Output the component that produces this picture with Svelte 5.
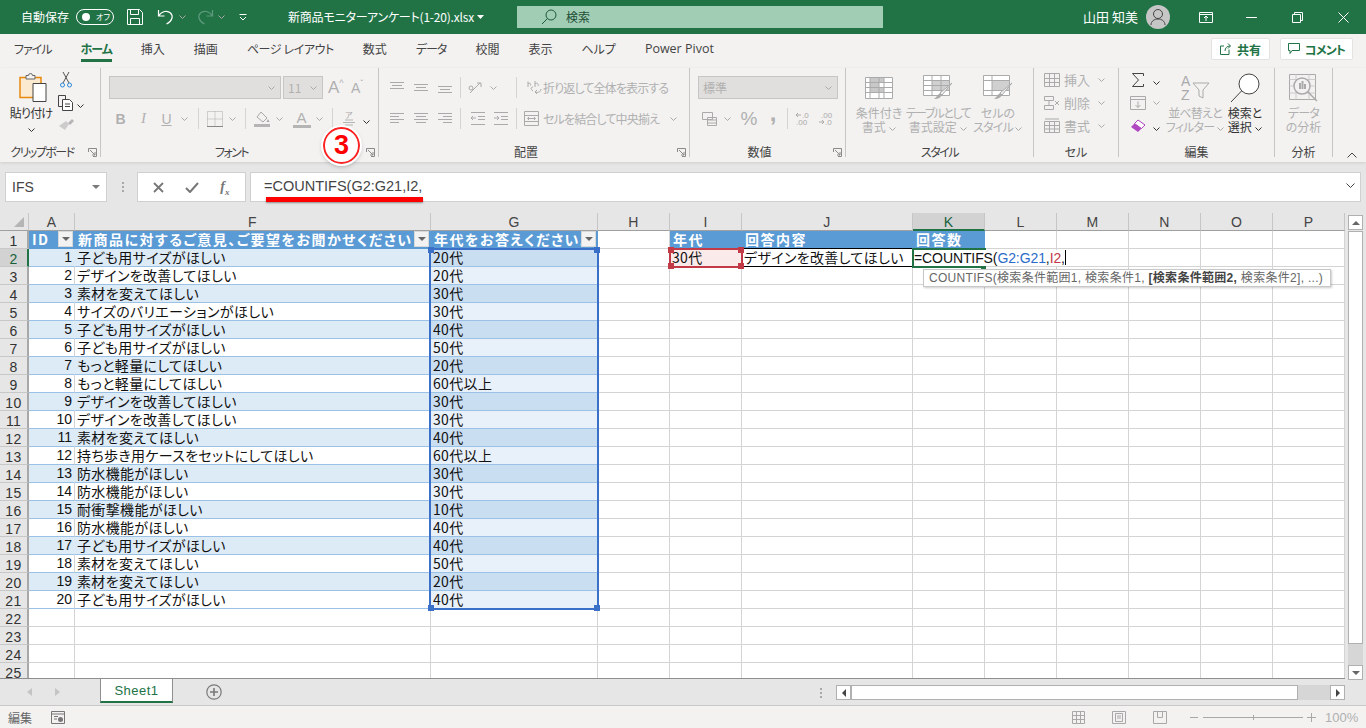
<script>
	const cols = ['A', 'F', 'G', 'H', 'I', 'J', 'K', 'L', 'M', 'N', 'O', 'P'];
	const rows = Array.from({ length: 25 }, (_, i) => i + 1);
	const tabs = ['ファイル', 'ホーム', '挿入', '描画', 'ページ レイアウト', '数式', 'データ', '校閲', '表示', 'ヘルプ', 'Power Pivot'];

	const answers = [
		['子ども用サイズがほしい', '20代'],
		['デザインを改善してほしい', '20代'],
		['素材を変えてほしい', '30代'],
		['サイズのバリエーションがほしい', '30代'],
		['子ども用サイズがほしい', '40代'],
		['子ども用サイズがほしい', '50代'],
		['もっと軽量にしてほしい', '20代'],
		['もっと軽量にしてほしい', '60代以上'],
		['デザインを改善してほしい', '30代'],
		['デザインを改善してほしい', '30代'],
		['素材を変えてほしい', '40代'],
		['持ち歩き用ケースをセットにしてほしい', '60代以上'],
		['防水機能がほしい', '30代'],
		['防水機能がほしい', '30代'],
		['耐衝撃機能がほしい', '10代'],
		['防水機能がほしい', '40代'],
		['子ども用サイズがほしい', '40代'],
		['素材を変えてほしい', '50代'],
		['素材を変えてほしい', '20代'],
		['子ども用サイズがほしい', '40代']
	];

	const heads = {
		A: 'ID',
		F: '新商品に対するご意見、ご要望をお聞かせください',
		G: '年代をお答えください。',
		I: '年代',
		J: '回答内容',
		K: '回答数'
	};

	function cellClass(r, c) {
		if (r === 1 && heads[c]) return 'cell th';
		if (r === 2 && c === 'I') return 'cell pink';
		if (r === 2 && c === 'J') return 'cell boxed';
		if (r >= 2 && r <= 21 && 'AFG'.includes(c)) {
			let s = 'cell td';
			if (r % 2 === 0) s += ' band';
			if (c === 'G') s += ' sel';
			if (c === 'A') s += ' idcol';
			return s;
		}
		return 'cell';
	}

	function cellText(r, c) {
		if (r === 1) return heads[c] ?? '';
		if (r === 2 && c === 'I') return '30代';
		if (r === 2 && c === 'J') return 'デザインを改善してほしい';
		if (r > 21) return '';
		if (c === 'A') return r - 1;
		if (c === 'F') return answers[r - 2][0];
		if (c === 'G') return answers[r - 2][1];
		return '';
	}
</script>

{#snippet chev(cls = '')}
	<span class="chev {cls}"><svg width="7" height="4" viewBox="0 0 7 4"><path d="M.5.5l3 3 3-3" fill="none" stroke="currentColor" /></svg></span>
{/snippet}

{#snippet launcher()}
	<svg class="launch" width="9" height="9" viewBox="0 0 9 9"><path d="M.5 4V.5H8.500V8.500H5M2 2l5 5M7 4v3H4" fill="none" stroke="#8a8a8a" /></svg>
{/snippet}

<div class="app">
	<header class="titlebar">
		<span class="autosave">自動保存</span>
		<span class="toggle"><i></i><b>オフ</b></span>
		<svg class="ti save" width="16" height="16" viewBox="0 0 16 16"><path d="M.5.500h12l3 3v12H.5zM3.500.5v5h8v-5M3.500 15.500v-6h9v6" fill="none" stroke="#fff" /></svg>
		<svg class="ti undo" width="18" height="18" viewBox="0 0 18 18"><path d="M1.500 2v6h6M1.500 8c3-5 9-6 12-3s2 8-4 11" fill="none" stroke="#fff" stroke-width="1.200" /></svg>
		<span class="tchev">{@render chev()}</span>
		<svg class="ti redo" width="18" height="18" viewBox="0 0 18 18"><path d="M16.500 2v6h-6M16.500 8c-3-5-9-6-12-3s-2 8 4 11" fill="none" stroke="#5d9a7b" stroke-width="1.200" /></svg>
		<span class="tchev dim">{@render chev()}</span>
		<svg class="ti custom" width="8" height="7" viewBox="0 0 8 7"><path d="M.5.500h7M1 3l3 3 3-3" fill="none" stroke="#fff" /></svg>
		<span class="filename">新商品モニターアンケート(1-20).xlsx</span>
		<svg class="caret" width="7" height="4" viewBox="0 0 7 4"><path d="M0 0h7L3.500 4z" fill="#fff" /></svg>
		<div class="search">
			<svg width="16" height="16" viewBox="0 0 16 16"><circle cx="10" cy="6" r="5" fill="none" stroke="#1d5a3a" /><path d="M6.500 9.500L1 15" stroke="#1d5a3a" /></svg>
			<span>検索</span>
		</div>
		<span class="user">山田 知美</span>
		<span class="avatar"><svg width="16" height="18" viewBox="0 0 16 18"><circle cx="8" cy="6" r="4.500" fill="none" stroke="#444" /><path d="M1 17c0-8 14-8 14 0" fill="none" stroke="#444" /></svg></span>
		<svg class="win w1" width="14" height="11" viewBox="0 0 14 11"><path d="M.5.500h13v10H.5zM.5 2.500h13M7 9V4.500M5 6l2-2 2 2" fill="none" stroke="#fff" /></svg>
		<svg class="win w2" width="11" height="1" viewBox="0 0 11 1"><path d="M0 .5h11" stroke="#fff" /></svg>
		<svg class="win w3" width="11" height="11" viewBox="0 0 11 11"><path d="M.5 2.500h8v8h-8zM2.500 2.500v-2h8v8h-2" fill="none" stroke="#fff" /></svg>
		<svg class="win w4" width="11" height="11" viewBox="0 0 11 11"><path d="M.5.500l10 10M10.500.500l-10 10" stroke="#fff" /></svg>
	</header>

	<nav class="tabs">
		{#each tabs as t, i}
			<span class="tab" class:current={i === 1} class:latin={i === 10} class:kana={i === 0 || i === 1 || i === 6} class:page={i === 4}>{t}</span>
		{/each}
		<span class="tabs-right">
			<button class="share">
				<svg width="12" height="12" viewBox="0 0 12 12"><path d="M9 6.500v5H.5V3H4M5 8c0-3 2-5 5-5M8 .5L10.500 3 8 5.500" fill="none" stroke="#217346" /></svg>
				<b>共有</b>
			</button>
			<button class="comment">
				<svg width="12" height="12" viewBox="0 0 12 12"><path d="M.5.500h11v7H4L2 10.500V7.500H.5z" fill="none" stroke="#217346" /></svg>
				<b class="kn">コメント</b>
			</button>
		</span>
	</nav>

	<section class="ribbon">
		<div class="group clip">
			<div class="body">
				<div class="big paste">
					<div class="bigicon">
						<svg width="28" height="30" viewBox="0 0 28 30">
							<path d="M1 4.500h21v20H1z" fill="#fbe9d0" stroke="#e8890c" stroke-width="1.500" />
							<path d="M7 4V2.500h2.500a2 2 0 0 1 4 0H16V6H7z" fill="#f3f2f1" stroke="#666" />
							<path d="M14 10.500h13v18H14z" fill="#fff" stroke="#444" />
						</svg>
					</div>
					<span class="dark kn">貼り付け</span>
					<span class="dark">{@render chev()}</span>
				</div>
				<div class="clipcol">
					<div class="row">
						<svg width="12" height="16" viewBox="0 0 12 16"><path d="M3 0l6 11M9 0L3 11" stroke="#555" /><circle cx="2.500" cy="13" r="2" fill="none" stroke="#2b88d8" /><circle cx="9.500" cy="13" r="2" fill="none" stroke="#2b88d8" /></svg>
					</div>
					<div class="row">
						<svg width="16" height="16" viewBox="0 0 16 16"><path d="M4 11.500H.5V.5h7V4" fill="none" stroke="#444" /><path d="M4.500 4.500h7l3 3v8h-10zM7 9h5M7 11.500h5" fill="#fff" stroke="#444" /></svg>
						<span class="dark">{@render chev()}</span>
					</div>
					<div class="row">
						<svg width="16" height="14" viewBox="0 0 16 14"><path d="M8 2l3 3-4 6-6-4z" fill="#ccc" /><path d="M10 4l4-4 2 2-4 4z" fill="#b5b5b5" /></svg>
					</div>
				</div>
			</div>
			<div class="glabel"><span class="kn2">クリップボード</span>{@render launcher()}</div>
		</div>

		<div class="group font">
			<div class="body col">
				<div class="row">
					<div class="combo fontname">{@render chev()}</div>
					<div class="combo fontsize"><span>11</span>{@render chev()}</div>
					<span class="grow">A<sup>^</sup></span>
					<span class="grow small">A<sup>ˇ</sup></span>
				</div>
				<div class="row">
					<span class="slot bold">B</span>
					<span class="slot ital">I</span>
					<span class="slot under">U</span>
					{@render chev('wide')}
					<i class="sep"></i>
					<span class="slot"><svg width="16" height="16" viewBox="0 0 16 16"><path d="M.5.500h15v15H.5zM8 .5v15M.5 8h15" fill="none" stroke="#aaa" stroke-dasharray="1 1" /><path d="M0 15.500h16" stroke="#888" /></svg></span>
					{@render chev()}
					<i class="sep"></i>
					<span class="slot"><svg width="16" height="16" viewBox="0 0 16 16"><path d="M7 1l6 6-4 4-6-5z" fill="none" stroke="#a8a8a8" /><path d="M14 8l1.500 3h-3z" fill="#a8a8a8" /><path d="M0 13h16v3H0z" fill="#b5b5b5" /></svg></span>
					{@render chev()}
					<span class="slot after"><span class="fa">A</span></span>
					{@render chev()}
					<i class="sep"></i>
					<span class="slot"><svg width="14" height="16" viewBox="0 0 14 16"><text x="3" y="7" class="tiny">ア</text><path d="M3 9h8M1 11.500h12M3 14h8" stroke="#b5b5b5" fill="none" /></svg></span>
					<span class="dark">{@render chev()}</span>
				</div>
			</div>
			<div class="glabel"><span class="kn2">フォント</span>{@render launcher()}</div>
		</div>

		<div class="group align">
			<div class="body col">
				<div class="row">
					<span class="aslot"><svg width="14" height="11" viewBox="0 0 14 11"><path d="M0 .5h14M2 3.500h10M0 6.500h14" stroke="#aaa" /></svg></span>
					<span class="aslot"><svg width="14" height="11" viewBox="0 0 14 11"><path d="M0 2.500h14M2 5.500h10M0 8.500h14" stroke="#aaa" /></svg></span>
					<span class="aslot"><svg width="14" height="11" viewBox="0 0 14 11"><path d="M0 4.500h14M2 7.500h10M0 10.500h14" stroke="#aaa" /></svg></span>
					<i class="sep s4"></i>
					<span class="slot"><svg width="16" height="14" viewBox="0 0 16 14"><path d="M2 12L12 2M9 2h4v4" fill="none" stroke="#aaa" /><circle cx="3" cy="7" r="2" fill="none" stroke="#aaa" /></svg></span>
					{@render chev()}
					<i class="sep s5"></i>
					<span class="wrapicon"><svg width="15" height="15" viewBox="0 0 15 15"><path d="M1 7V1.500M1 4c2-2 3 0 2.500 1.500M8 1v6M8 4c2-2 4 0 3 2M6 11c-3-2-2-4 0-4M14 9c0 3-3 4-6 3M10 10l-2 2 2 2" fill="none" stroke="#aaa" /></svg></span>
					<span class="wraplabel">折り返して全体を表示する</span>
				</div>
				<div class="row">
					<span class="aslot"><svg width="14" height="13" viewBox="0 0 14 13"><path d="M0 1.500h14M0 4.500h9M0 7.500h14M0 10.500h9" stroke="#aaa" /></svg></span>
					<span class="aslot"><svg width="14" height="13" viewBox="0 0 14 13"><path d="M0 1.500h14M2 4.500h10M0 7.500h14M2 10.500h10" stroke="#aaa" /></svg></span>
					<span class="aslot"><svg width="14" height="13" viewBox="0 0 14 13"><path d="M0 1.500h14M5 4.500h9M0 7.500h14M5 10.500h9" stroke="#aaa" /></svg></span>
					<i class="sep s4"></i>
					<span class="slot dedent"><svg width="14" height="13" viewBox="0 0 14 13"><path d="M0 .5h14M7 4.500h7M7 7.500h7M0 12.500h14M5 6H0M2 4L0 6l2 2" fill="none" stroke="#aaa" /></svg></span>
					<span class="slot"><svg width="14" height="13" viewBox="0 0 14 13"><path d="M0 .5h14M7 4.500h7M7 7.500h7M0 12.500h14M0 6h5M3 4l2 2-2 2" fill="none" stroke="#aaa" /></svg></span>
					<i class="sep s6"></i>
					<span class="mergeicon"><svg width="15" height="15" viewBox="0 0 15 15"><path d="M.5.500h14v14H.5zM.5 4.500h14M.5 10.500h14M4 7.500h7M5 6L3.500 7.500 5 9M10 6l1.500 1.500L10 9" fill="none" stroke="#aaa" /></svg></span>
					<span class="wraplabel merge">セルを結合して中央揃え</span>
					<span class="mergechev">{@render chev()}</span>
				</div>
			</div>
			<div class="glabel"><span>配置</span>{@render launcher()}</div>
		</div>

		<div class="group numbers">
			<div class="body col">
				<div class="row">
					<div class="combo format"><span>標準</span>{@render chev()}</div>
				</div>
				<div class="row">
					<span class="slot"><svg width="15" height="15" viewBox="0 0 15 15"><path d="M.5 1.500h10v7H.5zM5.500 6.500h9v8h-9zM5.500 9h9M5.500 12h9" fill="#f3f2f1" stroke="#aaa" /></svg></span>
					{@render chev()}
					<span class="pct">%</span>
					<span class="comma">,</span>
					<i class="sep s2"></i>
					<span class="slot"><svg width="15" height="15" viewBox="0 0 15 15"><path d="M0 4h5M2 2L0 4l2 2" fill="none" stroke="#aaa" /><text x="6" y="7" class="tiny">.0</text><text x="0" y="14" class="tiny">.00</text></svg></span>
					<span class="slot"><svg width="15" height="15" viewBox="0 0 15 15"><text x="2" y="7" class="tiny">.00</text><path d="M0 11h5M3 9l2 2-2 2" fill="none" stroke="#aaa" /><text x="6" y="14" class="tiny">.0</text></svg></span>
				</div>
			</div>
			<div class="glabel"><span>数値</span>{@render launcher()}</div>
		</div>

		<div class="group style">
			<div class="body">
				<div class="big w58">
					<div class="bigicon"><svg width="28" height="22" viewBox="0 0 28 22"><path d="M.5.500h27v21H.5z" fill="#fff" stroke="#aaa" /><path d="M5 1h14v5H5zM5 6h9v5H5zM5 11h14v5H5z" fill="#c8c8c8" /><path d="M.5 5.500h27M.5 10.500h27M.5 15.500h27M5 .5v21M14 .5v21M19 .5v21" stroke="#aaa" fill="none" /></svg></div>
					<span>条件付き</span>
					<span>書式 {@render chev('inl')}</span>
				</div>
				<div class="big w60">
					<div class="bigicon"><svg width="30" height="26" viewBox="0 0 30 26"><path d="M.5.500h26v20H.5z" fill="#fff" stroke="#aaa" /><path d="M9 6h17v10H9z" fill="#d0d0d0" /><path d="M.5 5.500h26M.5 10.500h26M.5 15.500h26M9 .5v20M18 .5v20" stroke="#aaa" fill="none" /><path d="M29 8L19 20l-2-2z" fill="#f3f2f1" stroke="#aaa" /><path d="M17 18l2 2c-2 4-6 4-8 4 2-1 3-4 6-6z" fill="#aaa" /></svg></div>
					<span class="kn2">テーブルとして</span>
					<span>書式設定 {@render chev('inl')}</span>
				</div>
				<div class="big w60">
					<div class="bigicon"><svg width="30" height="26" viewBox="0 0 30 26"><path d="M.5.500h26v20H.5z" fill="#fff" stroke="#aaa" /><path d="M9 6h17v10H9z" fill="#d0d0d0" /><path d="M.5 5.500h26M.5 15.500h26M9 .5v20" stroke="#aaa" fill="none" /><path d="M29 8L19 20l-2-2z" fill="#f3f2f1" stroke="#aaa" /><path d="M17 18l2 2c-2 4-6 4-8 4 2-1 3-4 6-6z" fill="#aaa" /></svg></div>
					<span>セルの</span>
					<span class="kn">スタイル {@render chev('inl')}</span>
				</div>
			</div>
			<div class="glabel plain"><span class="kn2">スタイル</span></div>
		</div>

		<div class="group cells">
			<div class="body col tight">
				<div class="line">
					<svg width="16" height="14" viewBox="0 0 16 14"><path d="M.5.500h15v13H.5zM.5 5.500h15M.5 9.500h15M5.500.5v13M10.500.5v13" fill="#f3f2f1" stroke="#aaa" /></svg>
					<span class="txt">挿入</span>{@render chev()}
				</div>
				<div class="line">
					<svg width="16" height="14" viewBox="0 0 16 14"><path d="M.5.500h9v4h-9zM.5 9.500h9v4h-9zM5 4.500v5" fill="none" stroke="#aaa" /><path d="M11 5l4 4M15 5l-4 4" stroke="#aaa" /></svg>
					<span class="txt">削除</span>{@render chev()}
				</div>
				<div class="line">
					<svg width="16" height="15" viewBox="0 0 16 15"><path d="M.5 3.500h15v11H.5zM.5 7.500h15M.5 11h15M5.500 3.500v11M10.500 3.500v11M1 1h14" fill="#f3f2f1" stroke="#aaa" /></svg>
					<span class="txt">書式</span>{@render chev()}
				</div>
			</div>
			<div class="glabel plain"><span>セル</span></div>
		</div>

		<div class="group edit">
			<div class="body">
				<div class="col tight editcol">
					<div class="line">
						<svg class="ed" width="13" height="14" viewBox="0 0 13 14"><path d="M12 3V.5H1L7 7l-6 6.500h11V11" fill="none" stroke="#444" /></svg>
						<span class="dark">{@render chev()}</span>
					</div>
					<div class="line">
						<svg class="ed" width="16" height="14" viewBox="0 0 16 14"><path d="M.5.500h15v13H.5zM.5 3.500h15M8 5.500v6M5.500 9L8 11.500 10.500 9" fill="none" stroke="#aaa" /></svg>
						{@render chev()}
					</div>
					<div class="line">
						<svg class="ed" width="16" height="14" viewBox="0 0 16 14"><path d="M1 8l7-7 7 5-7 7z" fill="#b146c2" /><path d="M8 1l7 5-3.500 3.500L4.500 4.500z" fill="#fff" stroke="#b146c2" /></svg>
						<span class="dark">{@render chev()}</span>
					</div>
				</div>
				<div class="big w60">
					<div class="bigicon"><svg width="29" height="26" viewBox="0 0 29 26"><text x="0" y="11" class="az">A</text><text x="0" y="25" class="az">Z</text><path d="M12 8h16l-6 7v8l-4-2v-6z" fill="none" stroke="#aaa" /></svg></div>
					<span class="kn">並べ替えと</span>
					<span class="kn">フィルター {@render chev('inl')}</span>
				</div>
				<div class="big w40">
					<div class="bigicon"><svg width="30" height="30" viewBox="0 0 30 30"><circle cx="19" cy="11" r="10" fill="#fff" stroke="#444" /><path d="M11.500 18L1 29" stroke="#444" /></svg></div>
					<span class="dark">検索と</span>
					<span class="dark">選択 {@render chev('inl')}</span>
				</div>
			</div>
			<div class="glabel plain"><span>編集</span></div>
		</div>

		<div class="group analysis">
			<div class="body">
				<div class="big wfull">
					<div class="bigicon"><svg width="29" height="28" viewBox="0 0 29 28"><path d="M.5.500h26v25H.5z" fill="#f3f2f1" stroke="#aaa" /><path d="M.5 5.500h26M.5 12h26M.5 19h26M7 .5v25M20 .5v25" stroke="#ccc" fill="none" /><circle cx="13" cy="12" r="8" fill="#f3f2f1" stroke="#aaa" stroke-width="1.500" /><path d="M10 9h2v6h-2zM12.500 7h2v8h-2zM15 10h2v5h-2z" fill="#aaa" /><path d="M19 18l9 9" stroke="#aaa" stroke-width="1.500" /></svg></div>
					<span class="kn">データ</span>
					<span>の分析</span>
				</div>
			</div>
			<div class="glabel plain"><span>分析</span></div>
		</div>

		<svg class="collapse" width="10" height="6" viewBox="0 0 10 6"><path d="M.5 5.500L5 1l4.500 4.500" fill="none" stroke="#444" /></svg>
	</section>

	<div class="formulabar">
		<div class="namebox"><span>IFS</span><svg width="8" height="4" viewBox="0 0 8 4"><path d="M0 0h8L4 4z" fill="#7a7a7a" /></svg></div>
		<div class="dots"><i></i><i></i><i></i></div>
		<div class="fbtns">
			<svg width="11" height="11" viewBox="0 0 11 11"><path d="M1 1l9 9M10 1l-9 9" stroke="#777" stroke-width="1.800" /></svg>
			<svg width="14" height="11" viewBox="0 0 14 11"><path d="M1 6l4 4 8-9" fill="none" stroke="#777" stroke-width="2" /></svg>
			<span class="fx">f<sub>x</sub></span>
		</div>
		<div class="finput"><span>=COUNTIFS(G2:G21,I2,</span><svg width="9" height="5" viewBox="0 0 9 5"><path d="M.5.500l4 4 4-4" fill="none" stroke="#444" /></svg></div>
	</div>

	<div class="main">
		<div class="sheet">
			<div class="grid">
				<div class="corner"><svg width="10" height="10" viewBox="0 0 10 10"><path d="M10 0v10H0z" fill="#b5b5b5" /></svg></div>
				{#each cols as c}
					<div class="ch" class:active={c === 'K'}>{c}</div>
				{/each}
				{#each rows as r}
					<div class="rh" class:active={r === 2}>{r}</div>
					{#each cols as c}
						<div class={cellClass(r, c)}>
							<span class="val">{cellText(r, c)}</span>
							{#if r === 1 && 'AFG'.includes(c)}
								<span class="filter"><svg width="8" height="4" viewBox="0 0 8 4"><path d="M0 0h8L4 4z" fill="#666" /></svg></span>
							{/if}
						</div>
					{/each}
				{/each}

				<div class="range"><i class="h tl"></i><i class="h tr"></i><i class="h bl"></i><i class="h br"></i></div>
				<div class="ref"><i class="h tl"></i><i class="h tr"></i><i class="h bl"></i><i class="h br"></i></div>
				<div class="kbox"><i class="fill"></i></div>
				<div class="editor">=COUNTIFS(<span class="blue">G2:G21</span>,<span class="red">I2</span>,<i class="cursor"></i></div>
				<div class="tip">COUNTIFS(検索条件範囲1, 検索条件1, <b>[検索条件範囲2,</b> 検索条件2], ...)</div>
			</div>
		</div>
		<div class="vscroll">
			<span class="sbtn"><svg width="8" height="4" viewBox="0 0 8 4"><path d="M0 4h8L4 0z" fill="#666" /></svg></span>
			<span class="vthumb"></span>
			<span class="vtrack"></span>
			<span class="sbtn"><svg width="8" height="4" viewBox="0 0 8 4"><path d="M0 0h8L4 4z" fill="#666" /></svg></span>
		</div>
	</div>

	<div class="tabbar">
		<span class="nav"><svg width="5" height="8" viewBox="0 0 5 8"><path d="M5 0v8L0 4z" fill="#c4c4c4" /></svg><svg width="5" height="8" viewBox="0 0 5 8"><path d="M0 0v8l5-4z" fill="#c4c4c4" /></svg></span>
		<span class="sheettab">Sheet1</span>
		<span class="plus"><svg width="16" height="16" viewBox="0 0 16 16"><circle cx="8" cy="8" r="7.200" fill="none" stroke="#7a7a7a" stroke-width="1.200" /><path d="M8 4v8M4 8h8" stroke="#7a7a7a" stroke-width="1.600" /></svg></span>
		<span class="hdots"><i></i><i></i><i></i></span>
		<div class="hscroll">
			<span class="hbtn"><svg width="4" height="8" viewBox="0 0 4 8"><path d="M4 0v8L0 4z" fill="#444" /></svg></span>
			<span class="hthumb"></span>
			<span class="htrack"></span>
			<span class="hbtn"><svg width="4" height="8" viewBox="0 0 4 8"><path d="M0 0v8l4-4z" fill="#444" /></svg></span>
		</div>
	</div>

	<footer class="status">
		<span class="mode">編集</span>
		<svg width="14" height="13" viewBox="0 0 14 13"><path d="M.5.500h13v12H.5zM.5 3h13M3 5.500h4M3 8h3" fill="none" stroke="#777" /><circle cx="9.500" cy="8.500" r="2.500" fill="#777" /></svg>
		<div class="views">
			<svg width="13" height="13" viewBox="0 0 13 13"><path d="M.5.500h12v12H.5zM.5 4.500h12M.5 8.500h12M4.500.5v12M8.500.5v12" fill="none" stroke="#a8a8a8" /></svg>
			<svg width="14" height="13" viewBox="0 0 14 13"><path d="M.5.500h13v12H.5zM3.500 2.500h7v8h-7zM5 5h4M5 7h4" fill="none" stroke="#a8a8a8" /></svg>
			<svg width="14" height="13" viewBox="0 0 14 13"><path d="M.5.500h13v12H.5zM4.500.5v6h5v-6" fill="none" stroke="#a8a8a8" /></svg>
		</div>
		<div class="zoom">
			<span class="minus"></span>
			<span class="slider"><i></i></span>
			<span class="pl"></span>
			<span class="pc">100%</span>
		</div>
	</footer>

	<div class="badge">3</div>
	<div class="underline"></div>
</div>

<style>
	:global(body) {
		margin: 0;
		background: #e6e6e6;
	}

	.app {
		position: relative;
		width: 1366px;
		height: 728px;
		overflow: hidden;
		font-family: 'Noto Sans CJK JP', 'Liberation Sans', sans-serif;
		font-feature-settings: 'palt';
		font-size: 12px;
		color: #b0b0b0;
		background: #e6e6e6;
	}

	/* title bar */
	.titlebar {
		display: flex;
		align-items: center;
		height: 34px;
		padding-left: 21px;
		background: #217346;
		color: #fff;
		box-sizing: border-box;
		line-height: 16px;
	}

	.autosave {
		flex: none;
		width: 48px;
		white-space: nowrap;
	}

	.toggle {
		display: flex;
		align-items: center;
		flex: none;
		width: 38px;
		height: 16px;
		margin-left: 7px;
		border: 1px solid #fff;
		border-radius: 9px;
		box-sizing: border-box;
	}

	.toggle i {
		width: 8px;
		height: 8px;
		margin-left: 5px;
		border-radius: 50%;
		background: #fff;
	}

	.toggle b {
		margin-left: 6px;
		font-size: 8px;
		font-weight: 400;
	}

	.ti {
		flex: none;
	}

	.save {
		margin-left: 13px;
	}

	.undo {
		margin-left: 14px;
	}

	.tchev {
		display: flex;
		margin-left: 1px;
		color: #fff;
	}

	.tchev.dim {
		color: #5d9a7b;
	}

	.redo {
		margin-left: 8px;
	}

	.custom {
		margin-left: 12px;
	}

	.filename {
		flex: none;
		width: 183px;
		margin-left: 41px;
		letter-spacing: -0.2px;
		white-space: nowrap;
		font-size: 12px;
	}

	.caret {
		flex: none;
		margin-left: 6px;
	}

	.search {
		display: flex;
		align-items: center;
		flex: none;
		width: 366px;
		height: 22px;
		margin-left: 33px;
		padding-left: 24px;
		box-sizing: border-box;
		background: #a0cdb4;
		color: #1f4d36;
	}

	.search span {
		margin-left: 9px;
	}

	.user {
		flex: none;
		width: 52px;
		margin-left: 200px;
		white-space: nowrap;
		font-size: 13px;
	}

	.avatar {
		display: flex;
		align-items: center;
		justify-content: center;
		flex: none;
		width: 24px;
		height: 24px;
		margin-left: 11px;
		border-radius: 50%;
		background: #c6c6c6;
	}

	.w1 {
		margin-left: 29px;
	}

	.w2 {
		margin-left: 33px;
	}

	.w3 {
		margin-left: 35px;
	}

	.w4 {
		margin-left: 35px;
	}

	/* tabs */
	.tabs {
		display: flex;
		align-items: center;
		gap: 29px;
		height: 34px;
		padding: 0 0 4px 14px;
		background: #f3f2f1;
		color: #444;
		font-size: 12px;
		box-sizing: border-box;
	}

	.tab {
		position: relative;
		white-space: nowrap;
		line-height: 16px;
	}

	.tab.kana {
		letter-spacing: -1px;
	}

	.tab.page {
		letter-spacing: -0.4px;
	}

	.tab.current {
		color: #217346;
		font-weight: 700;
	}

	.tab.current::after {
		content: '';
		position: absolute;
		left: 0;
		right: 0;
		top: 18px;
		height: 3px;
		background: #217346;
	}

	.tab.latin {
		font-family: 'Open Sans', 'Liberation Sans', sans-serif;
		font-size: 12.500px;
	}

	.tabs-right {
		display: flex;
		gap: 10px;
		margin-left: auto;
		padding-right: 13px;
	}

	.tabs-right button {
		display: flex;
		align-items: center;
		justify-content: center;
		gap: 5px;
		height: 22px;
		padding: 0;
		border: 1px solid #e3e3e3;
		border-radius: 2px;
		background: #fff;
		font: inherit;
		color: #217346;
	}

	.share {
		width: 59px;
	}

	.comment {
		width: 73px;
	}

	/* ribbon */
	.ribbon {
		position: relative;
		display: flex;
		height: 94px;
		background: #f3f2f1;
		box-shadow: 0 1px 3px rgba(0, 0, 0, 0.1);
	}

	.group {
		display: flex;
		flex-direction: column;
		height: 89px;
		border-right: 1px solid #c6c6c6;
		box-sizing: border-box;
	}

	.clip {
		width: 101px;
	}

	.font {
		width: 278px;
	}

	.font .body {
		padding-left: 8px;
	}

	.align {
		width: 311px;
	}

	.align .body {
		padding-left: 6px;
	}

	.numbers {
		width: 156px;
	}

	.numbers .body {
		padding-left: 8px;
	}

	.style {
		width: 188px;
	}

	.style .body {
		padding-left: 4px;
	}

	.cells {
		width: 85px;
	}

	.cells .body {
		padding-left: 10px;
	}

	.edit {
		width: 156px;
	}

	.edit .body {
		padding-left: 8px;
	}

	.analysis {
		width: 58px;
	}

	.body {
		display: flex;
		flex: 1;
		min-height: 0;
	}

	.col {
		flex-direction: column;
		display: flex;
		gap: 8px;
		padding-top: 8px;
	}

	.col.tight {
		gap: 0;
		padding-top: 0;
	}

	.row {
		display: flex;
		align-items: center;
		height: 23px;
	}

	.line {
		display: flex;
		align-items: center;
		height: 23px;
	}

	.txt {
		width: 31px;
		margin-left: 4px;
		font-size: 13px;
	}

	.big {
		display: flex;
		flex-direction: column;
		align-items: center;
		padding-top: 4px;
		box-sizing: border-box;
		line-height: 14px;
		white-space: nowrap;
	}

	.bigicon {
		display: flex;
		align-items: center;
		justify-content: center;
		height: 32px;
		margin-bottom: 2px;
	}

	.kn {
		letter-spacing: -0.8px;
	}

	.kn2 {
		letter-spacing: -1.5px;
	}

	.w40 {
		width: 40px;
	}

	.w58 {
		width: 58px;
	}

	.w60 {
		width: 60px;
	}

	.wfull {
		width: 100%;
	}

	.dark {
		color: #333;
	}

	.paste {
		width: 46px;
		margin-left: 8px;
	}

	.paste .bigicon {
		padding-left: 4px;
	}

	.clipcol {
		display: flex;
		flex-direction: column;
		padding-left: 4px;
	}

	.clipcol .row:first-child {
		padding-left: 2px;
	}

	.chev {
		display: inline-flex;
		align-items: center;
		justify-content: center;
		flex: none;
		width: 12px;
		height: 8px;
		color: #aaa;
	}

	.dark .chev {
		color: #333;
	}

	.chev.wide {
		width: 13px;
	}

	.chev.inl {
		width: 8px;
		vertical-align: 1px;
	}

	.glabel {
		display: flex;
		align-items: center;
		height: 14px;
		margin-bottom: -2px;
		color: #444;
		line-height: 14px;
		white-space: nowrap;
	}

	.glabel span {
		flex: 1;
		padding-right: 4px;
		text-align: center;
	}

	.glabel.plain span {
		padding-right: 0;
	}

	.launch {
		flex: none;
		margin-right: 3px;
	}

	.combo {
		display: flex;
		align-items: center;
		justify-content: space-between;
		height: 23px;
		padding: 0 3px 0 4px;
		border: 1px solid #c6c6c6;
		box-sizing: border-box;
		background: #e1dfdd;
	}

	.combo span:first-child {
		font-size: 12px;
	}

	.fontname {
		justify-content: flex-end;
		width: 172px;
		margin-right: 2px;
	}

	.fontsize {
		width: 40px;
	}

	.format {
		width: 140px;
	}

	.grow {
		margin-left: 5px;
		width: 20px;
		font-family: 'Liberation Sans', sans-serif;
		font-size: 17px;
		line-height: 20px;
	}

	.grow.small {
		margin-left: 3px;
		font-size: 14px;
	}

	.grow sup {
		font-size: 9px;
		vertical-align: 7px;
		line-height: 0;
	}

	.slot {
		display: inline-flex;
		align-items: center;
		justify-content: center;
		flex: none;
		width: 23px;
		height: 23px;
	}

	.slot.after {
		margin-left: 5px;
	}

	.slot.dedent {
		margin-left: 2px;
	}

	.bold {
		font-family: 'Liberation Sans', sans-serif;
		font-size: 14px;
		font-weight: 700;
	}

	.ital {
		font-family: 'Liberation Serif', serif;
		font-size: 15px;
		font-style: italic;
	}

	.under {
		font-family: 'Liberation Sans', sans-serif;
		font-size: 14px;
		text-decoration: underline;
	}

	.fa {
		width: 18px;
		border-bottom: 3px solid #b5b5b5;
		font-family: 'Liberation Sans', sans-serif;
		font-size: 15px;
		line-height: 15px;
		text-align: center;
	}

	.sep {
		flex: none;
		width: 1px;
		height: 21px;
		margin: 0 4px 0 7px;
		background: #d4d4d4;
	}

	.sep.s2 {
		margin: 0 4px 0 2px;
	}

	.sep.s4 {
		margin: 0 3px;
	}

	.sep.s5 {
		margin: 0 0 0 17px;
	}

	.sep.s6 {
		margin: 0 0 0 4px;
	}

	.aslot {
		display: inline-flex;
		align-items: center;
		justify-content: center;
		flex: none;
		width: 24px;
		height: 23px;
	}

	.wrapicon {
		display: inline-flex;
		width: 15px;
		margin-left: 10px;
		flex: none;
	}

	.wraplabel {
		margin-left: 1px;
		letter-spacing: -0.85px;
		white-space: nowrap;
	}

	.wraplabel.merge {
		margin-left: 4px;
	}

	.mergeicon {
		display: inline-flex;
		margin-left: 7px;
		flex: none;
	}

	.mergechev {
		display: inline-flex;
		margin-left: 8px;
	}

	.pct {
		width: 24px;
		margin-left: 4px;
		text-align: center;
		font-family: 'Liberation Sans', sans-serif;
		font-size: 19px;
	}

	.comma {
		width: 24px;
		padding-bottom: 12px;
		text-align: center;
		font-family: 'Liberation Sans', sans-serif;
		font-size: 24px;
		font-weight: 700;
		line-height: 14px;
	}

	.tiny {
		font-family: 'Liberation Sans', 'Noto Sans CJK JP', sans-serif;
		font-size: 8px;
		fill: #aaa;
	}

	.az {
		font-family: 'Liberation Sans', sans-serif;
		font-size: 14px;
		fill: #aaa;
	}

	.editcol {
		width: 38px;
		flex: none;
	}

	.ed {
		flex: none;
		width: 16px;
		margin: 0 4px 0 3px;
	}

	.collapse {
		position: absolute;
		right: 9px;
		top: 84px;
	}

	/* formula bar */
	.formulabar {
		display: flex;
		height: 33px;
		margin-top: 10px;
		padding: 0 5px;
		box-sizing: border-box;
	}

	.formulabar > div {
		height: 30px;
		box-sizing: border-box;
	}

	.namebox {
		display: flex;
		align-items: center;
		justify-content: space-between;
		flex: none;
		width: 102px;
		padding: 0 6px;
		border: 1px solid #d0d0d0;
		background: #fff;
		color: #444;
		font-family: 'Liberation Sans', sans-serif;
		font-size: 14px;
	}

	.dots {
		display: flex;
		flex-direction: column;
		flex: none;
		justify-content: center;
		gap: 2px;
		width: 30px;
		padding-left: 15px;
	}

	.dots i {
		width: 2px;
		height: 2px;
		background: #a8a8a8;
	}

	.fbtns {
		display: flex;
		align-items: center;
		justify-content: space-around;
		flex: none;
		width: 109px;
		padding: 0 5px;
		border: 1px solid #d0d0d0;
		background: #fff;
	}

	.fx {
		font-family: 'Liberation Serif', serif;
		font-size: 14px;
		font-style: italic;
		font-weight: 700;
		color: #777;
	}

	.fx sub {
		font-size: 9px;
		line-height: 0;
	}

	.finput {
		display: flex;
		align-items: center;
		justify-content: space-between;
		flex: 1;
		margin-left: 4px;
		padding: 0 5px 3px 13px;
		border: 1px solid #d0d0d0;
		background: #fff;
		color: #444;
		font-family: 'Liberation Sans', sans-serif;
		font-size: 14.500px;
	}

	/* sheet */
	.main {
		display: flex;
		height: 473px;
		padding-top: 8px;
		box-sizing: border-box;
	}

	.sheet {
		flex: none;
		width: 1345px;
	}

	.grid {
		position: relative;
		display: grid;
		grid-template-columns: 29px 46px 356px 167px 72px 72px 171px 72px 72px 72px 72px 72px 72px;
		grid-auto-rows: 18px;
		height: 465px;
		overflow: hidden;
		border-bottom: 1px solid #8f8f8f;
		background: #fff;
		color: #111;
		font-size: 14px;
		line-height: 17px;
		letter-spacing: 0.35px;
	}

	.corner {
		display: flex;
		align-items: flex-end;
		justify-content: flex-end;
		padding: 0 4px 3px 0;
		box-sizing: border-box;
		background: #e6e6e6;
		border-right: 1px solid #c6c6c6;
		border-bottom: 1px solid #a0a0a0;
	}

	.ch {
		border-right: 1px solid #c6c6c6;
		border-bottom: 1px solid #a0a0a0;
		background: #e6e6e6;
		color: #444;
		font-family: 'Liberation Sans', sans-serif;
		font-size: 14px;
		line-height: 19px;
		text-align: center;
		box-sizing: border-box;
	}

	.ch.active {
		background: #d2d2d2;
		color: #17603a;
		border-bottom: 2px solid #217346;
	}

	.rh {
		border-right: 2px solid #a8a8a8;
		border-bottom: 1px solid #c8c8c8;
		background: #e6e6e6;
		color: #333;
		font-family: 'Liberation Sans', sans-serif;
		font-size: 14px;
		line-height: 20px;
		text-align: center;
		box-sizing: border-box;
	}

	.rh.active {
		background: #d2d2d2;
		color: #17603a;
		border-right-color: #217346;
	}

	.cell {
		display: flex;
		justify-content: space-between;
		min-width: 0;
		padding-left: 2px;
		border-right: 1px solid #d4d4d4;
		border-bottom: 1px solid #d4d4d4;
		box-sizing: border-box;
		white-space: nowrap;
		overflow: hidden;
	}

	.val {
		min-width: 0;
		overflow: hidden;
	}

	.th {
		padding-left: 3px;
		border-color: #5b9bd5;
		border-right-color: #5b9bd5;
		background: #5b9bd5;
		color: #fff;
		font-weight: 700;
		letter-spacing: 1.500px;
	}

	.filter {
		display: flex;
		align-items: center;
		justify-content: center;
		flex: none;
		width: 15px;
		height: 16px;
		margin-right: 1px;
		background: #f2f2f2;
		border: 1px solid #d8d8d8;
		box-sizing: border-box;
	}

	.td {
		border-bottom-color: #9bc2e6;
		background: #fff;
	}

	.td.band {
		background: #ddebf7;
		border-right-color: #ddebf7;
	}

	.td.sel {
		background: #e8f0fa;
		border-right-color: #e8f0fa;
	}

	.td.sel.band {
		background: #cadef2;
		border-right-color: #cadef2;
	}

	.idcol {
		justify-content: flex-end;
		padding-right: 2px;
		font-family: 'Liberation Sans', sans-serif;
		letter-spacing: 0;
	}

	.pink {
		background: #fbeaea;
	}

	.boxed {
		position: relative;
		border-bottom-color: #000;
		border-right-color: #000;
		box-shadow: 0 -1px 0 #000;
	}

	.range,
	.ref,
	.kbox,
	.editor,
	.tip {
		position: absolute;
		box-sizing: border-box;
	}

	.range {
		left: 429px;
		top: 35px;
		width: 170px;
		height: 362px;
		border: 2px solid #3a70c8;
	}

	.ref {
		left: 669px;
		top: 35px;
		width: 74px;
		height: 20px;
		border: 2px solid #c23a46;
	}

	.h {
		position: absolute;
		width: 6px;
		height: 6px;
		background: #3a70c8;
	}

	.ref .h {
		background: #c23a46;
	}

	.tl {
		left: -3px;
		top: -3px;
	}

	.tr {
		right: -3px;
		top: -3px;
	}

	.bl {
		left: -3px;
		bottom: -3px;
	}

	.br {
		right: -3px;
		bottom: -3px;
	}

	.kbox {
		left: 912px;
		top: 35px;
		width: 74px;
		height: 20px;
		border: 2px solid #217346;
		border-right: 0;
		z-index: 1;
	}

	.fill {
		position: absolute;
		right: 0;
		bottom: -3px;
		width: 5px;
		height: 3px;
		background: #217346;
	}

	.editor {
		left: 914px;
		top: 37px;
		width: 154px;
		height: 16px;
		background: #fff;
		font-family: 'Liberation Sans', sans-serif;
		font-size: 14px;
		line-height: 16px;
		letter-spacing: -0.1px;
		color: #111;
		white-space: nowrap;
	}

	.blue {
		color: #2a6bc9;
	}

	.red {
		color: #c23a46;
	}

	.cursor {
		display: inline-block;
		width: 1px;
		height: 15px;
		background: #000;
		vertical-align: -2px;
	}

	.tip {
		left: 923px;
		top: 56px;
		width: 408px;
		height: 18px;
		padding-left: 5px;
		border: 1px solid #c8c8c8;
		box-shadow: 1px 1px 2px rgba(0, 0, 0, 0.2);
		background: #fff;
		color: #666;
		font-family: 'Liberation Sans', 'Noto Sans CJK JP', sans-serif;
		font-size: 12px;
		letter-spacing: 0.3px;
		line-height: 16px;
		white-space: nowrap;
	}

	.tip b {
		color: #444;
	}

	.vscroll {
		display: flex;
		flex-direction: column;
		flex: none;
		width: 15px;
		height: 465px;
		margin: 2px 3px 0;
	}

	.sbtn {
		display: flex;
		align-items: center;
		justify-content: center;
		flex: none;
		height: 15px;
		border: 1px solid #b0b0b0;
		box-sizing: border-box;
		background: #fff;
	}

	.vthumb {
		flex: none;
		height: 413px;
		margin-top: 1px;
		background: #fff;
		border: 1px solid #b0b0b0;
		box-sizing: border-box;
	}

	.vtrack {
		flex: 1;
		background: #d6d6d6;
	}

	/* sheet tabs */
	.tabbar {
		display: flex;
		align-items: flex-start;
		height: 28px;
		background: #e6e6e6;
		border-bottom: 1px solid #c8c8c8;
		box-sizing: border-box;
	}

	.nav {
		display: flex;
		align-items: center;
		gap: 23px;
		width: 100px;
		height: 27px;
		padding-left: 27px;
		box-sizing: border-box;
	}

	.sheettab {
		width: 73px;
		height: 25px;
		padding-top: 5px;
		box-sizing: border-box;
		background: #fff;
		border: solid #8f8f8f;
		border-width: 0 1px;
		border-bottom: 2px solid #217346;
		color: #217346;
		font-family: 'Liberation Sans', sans-serif;
		font-size: 13px;
		letter-spacing: 0.5px;
		text-align: center;
	}

	.plus {
		display: flex;
		margin: 6px 0 0 33px;
	}

	.hdots {
		display: flex;
		flex-direction: column;
		gap: 2px;
		margin: 10px 0 0 598px;
	}

	.hdots i {
		width: 2px;
		height: 2px;
		background: #a8a8a8;
	}

	.hscroll {
		display: flex;
		width: 509px;
		height: 15px;
		margin: 7px 0 0 14px;
	}

	.hbtn {
		display: flex;
		align-items: center;
		justify-content: center;
		flex: none;
		width: 15px;
		border: 1px solid #b0b0b0;
		box-sizing: border-box;
		background: #fff;
	}

	.hthumb {
		flex: none;
		width: 447px;
		background: #fff;
		border: 1px solid #b0b0b0;
		box-sizing: border-box;
	}

	.htrack {
		flex: 1;
		background: #d6d6d6;
	}

	/* status bar */
	.status {
		display: flex;
		align-items: center;
		height: 22px;
		padding-left: 8px;
		background: #f3f2f1;
		color: #666;
	}

	.mode {
		width: 43px;
	}

	.views {
		display: flex;
		align-items: center;
		gap: 27px;
		margin-left: 1007px;
	}

	.zoom {
		display: flex;
		align-items: center;
		margin-left: 23px;
	}

	.minus {
		width: 8px;
		height: 1px;
		background: #a8a8a8;
	}

	.slider {
		position: relative;
		width: 100px;
		height: 1px;
		margin-left: 5px;
		background: #a8a8a8;
	}

	.slider i {
		position: absolute;
		left: 50px;
		top: -2px;
		width: 1px;
		height: 5px;
		background: #a8a8a8;
	}

	.pl {
		position: relative;
		width: 9px;
		height: 1px;
		margin-left: 4px;
		background: #a8a8a8;
	}

	.pl::after {
		content: '';
		position: absolute;
		left: 4px;
		top: -4px;
		width: 1px;
		height: 9px;
		background: #a8a8a8;
	}

	.pc {
		margin-left: 9px;
		font-family: 'Liberation Sans', sans-serif;
		font-size: 13px;
		color: #b0b0b0;
	}

	/* annotation overlay */
	.badge {
		position: absolute;
		left: 323px;
		top: 127px;
		width: 37px;
		height: 37px;
		border: 2px solid #f22;
		border-radius: 50%;
		outline: 2px solid #fff;
		box-shadow: 0 2px 5px rgba(0, 0, 0, 0.35);
		box-sizing: border-box;
		background: #fff;
		color: #f00;
		font-family: 'Liberation Sans', sans-serif;
		font-size: 27px;
		font-weight: 700;
		line-height: 33px;
		text-align: center;
	}

	.underline {
		position: absolute;
		left: 266px;
		top: 197px;
		width: 157px;
		height: 5px;
		background: #f00;
		box-shadow: 0 1px 2px rgba(0, 0, 0, 0.4);
	}
</style>
